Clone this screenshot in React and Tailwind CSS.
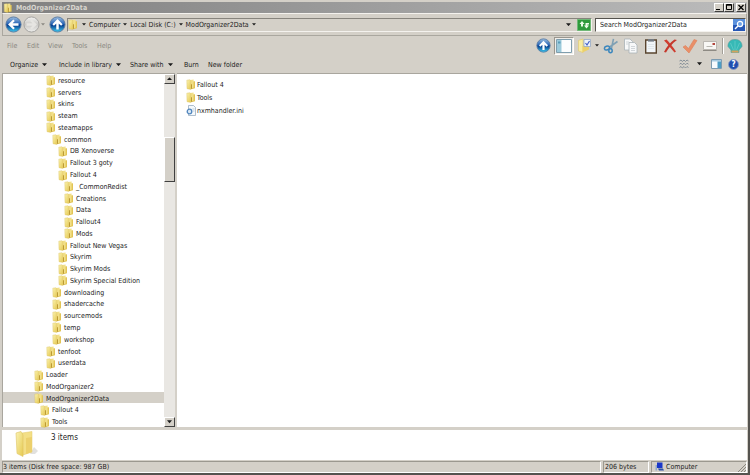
import React from "react";

const tree = [
  ["resource", 4], ["servers", 4], ["skins", 4], ["steam", 4], ["steamapps", 4],
  ["common", 5], ["DB Xenoverse", 6], ["Fallout 3 goty", 6], ["Fallout 4", 6],
  ["_CommonRedist", 7], ["Creations", 7], ["Data", 7], ["Fallout4", 7], ["Mods", 7],
  ["Fallout New Vegas", 6], ["Skyrim", 6], ["Skyrim Mods", 6], ["Skyrim Special Edition", 6],
  ["downloading", 5], ["shadercache", 5], ["sourcemods", 5], ["temp", 5], ["workshop", 5],
  ["tenfoot", 4], ["userdata", 4], ["Loader", 2], ["ModOrganizer2", 2],
  ["ModOrganizer2Data", 2], ["Fallout 4", 3], ["Tools", 3],
];

const indent = {
  2: "pl-[31px]",
  3: "pl-[37px]",
  4: "pl-[43px]",
  5: "pl-[49px]",
  6: "pl-[55px]",
  7: "pl-[61px]",
};

function Defs() {
  return (
    <svg className="absolute size-0" aria-hidden="true">
      <defs>
        <linearGradient id="folderFront" x1="0" y1="0" x2="1" y2="1">
          <stop offset="0" stopColor="#faf3b4" />
          <stop offset="1" stopColor="#e6c950" />
        </linearGradient>
        <linearGradient id="orb" x1="0" y1="0" x2="0" y2="1">
          <stop offset="0" stopColor="#9dbfe2" />
          <stop offset="0.45" stopColor="#2a66b6" />
          <stop offset="0.55" stopColor="#07408f" />
          <stop offset="1" stopColor="#3fcdf2" />
        </linearGradient>
        <linearGradient id="orbOff" x1="0" y1="0" x2="0" y2="1">
          <stop offset="0" stopColor="#f4f4f2" />
          <stop offset="0.5" stopColor="#c9c8c5" />
          <stop offset="1" stopColor="#eeeeec" />
        </linearGradient>
      </defs>
    </svg>
  );
}

function Folder({ className = "h-[11px] w-[10px]" }) {
  return (
    <svg viewBox="0 0 10 11" className={`shrink-0 ${className}`} aria-hidden="true">
      <path d="M5.5 2.6 9 2.2V9.3L5.5 10.2Z" fill="#e2c455" />
      <path d="M4.4.9 7.6.6V8.6L4.4 10Z" fill="#f2e088" />
      <path d="M.8 1.2 3.8.7 4.8 1.5V10.4L1 9.7Z" fill="url(#folderFront)" stroke="#dcc15c" strokeWidth=".4" />
      <path d="M5 5.200h1v4.400l-1 .6Z" fill="#bc9b34" />
    </svg>
  );
}

function Orb({ dir, off, className = "size-[17px]" }) {
  const rot = { up: 0, left: -90, right: 90 }[dir];
  return (
    <svg viewBox="0 0 18 18" className={`shrink-0 ${className}`} aria-hidden="true">
      <circle cx="9" cy="9" r="8" fill={off ? "url(#orbOff)" : "url(#orb)"} stroke={off ? "#a3a29f" : "#5a7ba2"} />
      <g transform={`rotate(${rot} 9 9)`}>
        <path d="M9 3.2 14.4 8.8 12.8 10.4 10.3 8V14.3H7.7V8L5.2 10.4 3.6 8.8Z" fill={off ? "#e6e5e2" : "#fff"} />
      </g>
    </svg>
  );
}

function Caret({ className = "w-[5px]" }) {
  return (
    <svg viewBox="0 0 6 4" className={`shrink-0 ${className}`} aria-hidden="true">
      <path d="M0 .3H6L3 3.8Z" fill="currentColor" />
    </svg>
  );
}

function Crumb({ children }) {
  return (
    <button className="flex items-center gap-[3px]">
      {children}
      <Caret className="w-[4px]" />
    </button>
  );
}

function CaptionButton({ label, children }) {
  return (
    <button aria-label={label} className="h-[9px] w-[10px] border border-white border-r-[#404040] border-b-[#404040] bg-[#d4d0c8]">
      <svg viewBox="0 0 8 7" className="h-[7px] w-[8px]" fill="none" stroke="#000" aria-hidden="true">{children}</svg>
    </button>
  );
}

function TitleBar() {
  return (
    <header className="flex h-[11px] shrink-0 items-center bg-linear-to-r from-[#808080] to-[#bcbcbc] pr-px pl-px">
      <Folder className="h-[10px] w-[10px]" />
      <h1 className="ml-[3px] flex-1 pt-px text-[7px] leading-[10px] font-bold text-[#d8d5ce]">ModOrganizer2Data</h1>
      <div className="flex">
        <CaptionButton label="Minimize"><path d="M1 5.5H5" /></CaptionButton>
        <CaptionButton label="Maximize"><path d="M1.5.5h5v5h-5ZM1 1.2h6" /></CaptionButton>
        <span className="w-[2px]" />
        <CaptionButton label="Close"><path d="m1.5 1 5 5m0-5-5 5" strokeWidth="1.3" /></CaptionButton>
      </div>
    </header>
  );
}

function AddressBar() {
  return (
    <div className="flex h-[23px] shrink-0 items-center border border-[#aaa79f] border-t-[#f4f2ee] pl-[2px]">
      <button aria-label="Back"><Orb dir="left" /></button>
      <button aria-label="Forward" className="ml-px"><Orb dir="right" off /></button>
      <button aria-label="Recent pages" className="ml-px text-[#8b8983]"><Caret className="w-[4px]" /></button>
      <button aria-label="Up" className="mr-px ml-[4px]"><Orb dir="up" /></button>
      <div className="flex h-[14px] flex-1 items-center border border-[#87847d] border-r-[#f4f2ee] border-b-[#f4f2ee]">
        <Folder />
        <Caret className="mr-[3px] ml-[4px] w-[4px]" />
        <nav aria-label="Address" className="flex flex-1 gap-[3px]">
          <Crumb>Computer</Crumb>
          <Crumb>Local Disk (C:)</Crumb>
          <Crumb>ModOrganizer2Data</Crumb>
        </nav>
        <button aria-label="Previous locations" className="mr-[6px]"><Caret /></button>
        <button aria-label="Refresh">
          <svg viewBox="0 0 14 12" className="h-[12px] w-[14px]" aria-hidden="true">
            <path d="M.5.5h13v11H.5Z" fill="#2e9a3c" stroke="#6fb877" />
            <path d="M5 2 2.500 5H4V7.500H6V5H7.500ZM9.500 9.500 7 6.500H8.500V4H12V5.500H10.500V6.500H12Z" fill="#eafbe9" />
          </svg>
        </button>
      </div>
      <div className="ml-[3px] flex h-[14px] w-[151px] items-center border border-[#55534e] border-r-[#f4f2ee] border-b-[#f4f2ee] bg-white">
        <input aria-label="Search" defaultValue="Search ModOrganizer2Data" className="min-w-0 flex-1 bg-transparent pl-[4px] leading-[10px] outline-none" />
        <button aria-label="Start search">
          <svg viewBox="0 0 12 12" className="size-[12px]" aria-hidden="true">
            <path d="M0 0h12v12H0Z" fill="#5a90dc" />
            <path d="M0 6h12v6H0Z" fill="#2657b5" />
            <circle cx="7" cy="5" r="2.6" fill="#6ea2e6" stroke="#fff" strokeWidth="1.2" />
            <path d="M5 7 2 10" stroke="#fff" strokeWidth="1.5" />
          </svg>
        </button>
      </div>
    </div>
  );
}

function ToolIcons() {
  return (
    <div className="flex items-center">
      <button aria-label="Up one level"><Orb dir="up" className="size-[15px]" /></button>
      <button aria-label="Folder pane" className="ml-[3px] border border-[#9a978f] border-r-white border-b-white bg-[#efede9] px-px">
        <svg viewBox="0 0 16 16" className="size-[16px]" aria-hidden="true">
          <path d="M.5 1.5h15v13H.5Z" fill="#fbfdfe" stroke="#7f9eae" />
          <path d="M1 2h4.500v12H1Z" fill="#9ccadb" />
          <path d="M2 3.500h2.500v2H2Z" fill="#5b9db9" />
        </svg>
      </button>
      <button aria-label="Select" className="ml-[3px]">
        <svg viewBox="0 0 16 16" className="size-[16px]" aria-hidden="true">
          <path d="M1.500 2.500 6 1V14.500L1.500 13Z" fill="#f8eba0" stroke="#dfc45c" strokeWidth=".5" />
          <path d="M5.500 8h6.500v3.500l-6.500 3Z" fill="#ecd06a" />
          <path d="M7 1.500h6.500v7H7Z" fill="#edf3fb" stroke="#96a9c4" strokeWidth=".8" />
          <path d="m8.500 5 1.500 2 2.500-4" fill="none" stroke="#4562c8" strokeWidth="1.2" />
        </svg>
      </button>
      <button aria-label="Select options" className="ml-[2px]"><Caret className="w-[4px]" /></button>
      <button aria-label="Cut" className="ml-[4px]">
        <svg viewBox="0 0 16 16" className="size-[16px]" fill="none" aria-hidden="true">
          <path d="M14.500 3.500 6 9.500M10.500.8 8.300 11" stroke="#7fa0b4" strokeWidth="1.6" />
          <ellipse cx="4" cy="10" rx="2.6" ry="1.8" stroke="#3b86bd" strokeWidth="1.5" transform="rotate(-20 4 10)" />
          <ellipse cx="7.5" cy="12.8" rx="1.7" ry="2" stroke="#3b86bd" strokeWidth="1.5" />
        </svg>
      </button>
      <button aria-label="Copy" className="ml-[4px]">
        <svg viewBox="0 0 16 16" className="size-[16px]" fill="#f7f8f9" stroke="#aab2b8" strokeWidth=".8" aria-hidden="true">
          <path d="M1.500 1H7L9.500 3.500V12h-8Z" />
          <path d="M6 4.500h5.500L14 7v8H6Z" />
          <path d="M3 4h3M3 6h2.500M8 8.500h4M8 10.500h4M8 12.500h4" stroke="#c5ccd1" />
        </svg>
      </button>
      <button aria-label="Paste" className="ml-[4px]">
        <svg viewBox="0 0 16 16" className="size-[16px]" aria-hidden="true">
          <path d="M2.700 2h10.600v13H2.700Z" fill="#f1f5f8" stroke="#5a452f" strokeWidth="1.4" />
          <path d="M5 1h6v2.600H5Z" fill="#747b83" />
          <path d="M5 6.500h6M5 8.500h6M5 10.500h6" stroke="#d4dbe0" strokeWidth=".6" />
        </svg>
      </button>
      <button aria-label="Delete" className="ml-[3px]">
        <svg viewBox="0 0 16 16" className="size-[16px]" aria-hidden="true">
          <path d="M2 2.500 4.500 1.500C7 4 11 9 14 13.500L12.500 14.500C9.500 11 6 6.500 2 2.500Z" fill="#cf3d2f" />
          <path d="M12.500 1.500 15 2C10 5.500 6.500 10 4 14.500L2 14C4.500 9 8 4.500 12.500 1.500Z" fill="#c5382c" />
        </svg>
      </button>
      <button aria-label="Rename" className="ml-[4px]">
        <svg viewBox="0 0 16 16" className="size-[16px]" aria-hidden="true">
          <path d="M1 9 3.500 7.500 6.500 10.500 12 1.500 15 2.500 7 15Z" fill="#e98f68" stroke="#dd8059" strokeWidth=".6" />
        </svg>
      </button>
      <button aria-label="E-mail" className="ml-[4px]">
        <svg viewBox="0 0 16 16" className="size-[16px]" aria-hidden="true">
          <path d="M1.500 3.500h13v8h-13Z" fill="#f8f7f4" stroke="#b5b2ab" strokeWidth=".9" />
          <path d="M1 12.500h13.500" stroke="#8d8a83" />
          <path d="M10.500 5h2.500v2h-2.500Z" fill="#b3473d" />
          <path d="M4.500 8.500h6" stroke="#a9a7a1" strokeWidth=".8" />
        </svg>
      </button>
      <span className="ml-[4px] h-[16px] border-r border-l border-[#a29f98] border-r-white" />
      <button aria-label="Shell" className="ml-[3px]">
        <svg viewBox="0 0 16 16" className="size-[16px]" aria-hidden="true">
          <path d="M8 1.500C12 1 15.500 4.500 15 8.500L12 12v2.500H4V12L1 8.500C.5 4.500 4 1 8 1.500Z" fill="#36b9b6" stroke="#5a9899" strokeWidth=".6" />
          <path d="M8 12V3M6.500 12 3.500 5M9.500 12 12.500 5" stroke="#5fcac6" strokeWidth=".9" />
          <path d="M4.500 12.500h7V14.500h-7Z" fill="#d6a25d" />
        </svg>
      </button>
    </div>
  );
}

function MenuBar() {
  return (
    <div className="flex h-[19px] shrink-0 items-center justify-between pr-[4px] pl-[5px]">
      <nav aria-label="Menu" className="flex text-[#8a8881]">
        <button className="w-[20px] text-left">File</button>
        <button className="w-[21px] text-left">Edit</button>
        <button className="w-[24px] text-left">View</button>
        <button className="w-[25px] text-left">Tools</button>
        <button>Help</button>
      </nav>
      <ToolIcons />
    </div>
  );
}

function CommandBar() {
  return (
    <div className="flex h-[18px] shrink-0 items-center justify-between pr-[8px] pl-[8px]">
      <div className="flex pt-px">
        <button className="flex w-[49px] items-center gap-[4px]">Organize <Caret /></button>
        <button className="flex w-[71px] items-center gap-[4px]">Include in library <Caret /></button>
        <button className="flex w-[54px] items-center gap-[4px]">Share with <Caret /></button>
        <button className="w-[24px] text-left">Burn</button>
        <button>New folder</button>
      </div>
      <div className="flex items-center">
        <button aria-label="Change view">
          <svg viewBox="0 0 10 10" className="size-[10px]" fill="none" stroke="#7e8993" aria-hidden="true">
            <path d="M.5 2 2 1 3.300 2.500 5 1 6.500 2.500 8 1 9.500 2M.5 5.200 2 4.200 3.300 5.700 5 4.200 6.500 5.700 8 4.200 9.500 5.200M.5 8.500 2 7.500 3.300 9 5 7.500 6.500 9 8 7.500 9.500 8.500" strokeWidth=".9" />
          </svg>
        </button>
        <button aria-label="View options" className="ml-[8px]"><Caret /></button>
        <button aria-label="Preview pane" className="ml-[9px]">
          <svg viewBox="0 0 11 10" className="h-[10px] w-[11px]" aria-hidden="true">
            <path d="M.5.5h10v9H.5Z" fill="#f8fbfd" stroke="#7d9bb0" />
            <path d="M1 1h9v1.500H1Z" fill="#a9cbe0" />
            <path d="M6.500 2.500H10V9H6.500Z" fill="#4d9dc4" />
          </svg>
        </button>
        <button aria-label="Help" className="ml-[6px] size-[11px] rounded-full border border-[#8d9dc2] bg-[#1f4eb0] text-[8px] leading-[9px] font-bold text-white">?</button>
      </div>
    </div>
  );
}

function ScrollBar() {
  const arrow = "flex h-[10px] shrink-0 items-center justify-center border border-white border-r-[#404040] border-b-[#404040] bg-[#d4d0c8]";
  return (
    <div className="flex w-[11px] shrink-0 flex-col bg-[#e9e7e3]">
      <button aria-label="Scroll up" className={arrow}><Caret className="w-[5px] rotate-180" /></button>
      <div className="flex-[54]" />
      <div className="flex-[43] border border-white border-r-[#404040] border-b-[#404040] bg-[#d4d0c8]" />
      <div className="flex-[238]" />
      <button aria-label="Scroll down" className={arrow}><Caret className="w-[5px]" /></button>
    </div>
  );
}

function IniFile() {
  return (
    <svg viewBox="0 0 10 11" className="h-[11px] w-[10px] shrink-0" aria-hidden="true">
      <path d="M2.500.5h5L9.500 2.500v8h-7Z" fill="#f5f9fc" stroke="#8ca3b8" strokeWidth=".7" />
      <circle cx="3.5" cy="6.5" r="2.3" fill="#dceaf6" stroke="#5286bd" strokeWidth="1.3" />
      <path d="M6.500 4h2M7 6h1.500" stroke="#9eb4c6" strokeWidth=".6" />
    </svg>
  );
}

function StatusBar() {
  const cell = "flex h-[12px] items-center border border-[#9b988f] border-r-white border-b-white";
  return (
    <footer className="flex h-[13px] shrink-0 items-center gap-[2px]">
      <div className={`${cell} flex-1`}>3 items (Disk free space: 987 GB)</div>
      <div className={`${cell} w-[46px] pl-px`}>206 bytes</div>
      <div className={`${cell} w-[96px] pl-[3px]`}>
        <svg viewBox="0 0 9 9" className="size-[9px]" aria-hidden="true">
          <path d="M2 .5h5.500v5.500H2Z" fill="#1936c9" />
          <path d="M.5 3h1.500v5.500H.5Z" fill="#8fa8cb" />
          <path d="M3 6.500h5L9 8.500H4Z" fill="#2b4fa8" />
        </svg>
        <span className="ml-[2px] flex-1">Computer</span>
        <svg viewBox="0 0 9 9" className="size-[9px] self-end" stroke="#8b8880" aria-hidden="true">
          <path d="M1 9 9 1M4 9l5-5M7 9l2-2" />
        </svg>
      </div>
    </footer>
  );
}

export default function App() {
  return (
    <div className="flex h-screen flex-col border-r-2 border-b-2 border-[#55534f] bg-[#d4d0c8] font-['DejaVu_Sans_Condensed','Liberation_Sans',sans-serif] text-[7px] leading-[10px] whitespace-nowrap text-[#1c1c1c]">
      <Defs />
      <div className="flex min-h-0 flex-1 flex-col pt-[2px] pr-px pl-[2px]">
        <TitleBar />
        <AddressBar />
        <MenuBar />
        <CommandBar />
        <main className="flex min-h-0 flex-1">
          <div className="flex w-[173px] shrink-0 border-t border-l border-[#a9a69e] bg-white">
            <ul className="flex min-w-0 flex-1 flex-col">
              {tree.map(([name, level], i) => (
                <li key={i} className={`flex min-h-0 flex-1 items-center gap-[2px] pt-[2px] ${indent[level]} ${name === "ModOrganizer2Data" ? "bg-[#d4d0c8]" : ""}`}>
                  <Folder />
                  {name}
                </li>
              ))}
            </ul>
            <ScrollBar />
          </div>
          <ul className="ml-[2px] flex-1 border-t border-[#a9a69e] bg-white pt-[4px] pl-[9px]">
            {["Fallout 4", "Tools", "nxmhandler.ini"].map((name) => (
              <li key={name} className="flex h-[13px] items-center gap-px">
                {name.endsWith(".ini") ? <IniFile /> : <Folder />}
                {name}
              </li>
            ))}
          </ul>
        </main>
        <section className="mt-[3px] flex h-[30px] shrink-0 bg-white pl-[11px]">
          <svg viewBox="0 0 28 28" className="size-[28px]" aria-hidden="true">
            <path d="M17 24 21 17 25 21 22 24Z" fill="#e2e1de" />
            <path d="M9 3 19 1.500V22L10 25Z" fill="#f3df86" stroke="#e2c868" strokeWidth=".5" />
            <path d="M13 8 19 7V22L13 24Z" fill="#ecd06c" />
            <path d="M3 3 8 1.500 10 5V26.500L4 23.500Z" fill="url(#folderFront)" stroke="#dfc463" strokeWidth=".6" />
          </svg>
          <p className="mt-[3px] ml-[10px] text-[8px] leading-[10px]">3 items</p>
        </section>
        <StatusBar />
      </div>
    </div>
  );
}
